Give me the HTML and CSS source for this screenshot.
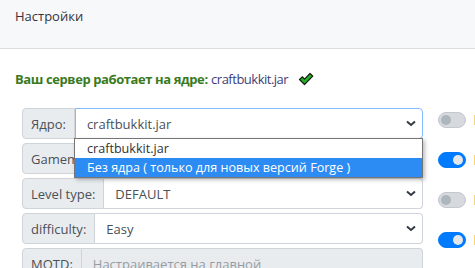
FILE: index.html
```html
<!DOCTYPE html>
<html lang="ru">
<head>
    <meta charset="UTF-8">
    <meta name="viewport" content="width=device-width, initial-scale=1.0">
    <title>Настройки</title>
    <link rel="stylesheet" href="styles.css">
</head>
<body>
    <div class="card">
        <div class="card-header">Настройки</div>
        <div class="card-body">
            <p class="status">
                <b>Ваш сервер работает на ядре:</b> <span class="core">craftbukkit.jar</span>
                <svg class="check" width="16" height="14" viewBox="0 0 16 14">
                    <path d="M1.5 7.5 L4.5 4.8 L6.5 7.2 L12 1.5 L14.8 4.2 L6.5 12.5 Z" fill="#22b322" stroke="#1a1a1a" stroke-width="1.2" stroke-linejoin="round"/>
                </svg>
            </p>
            <div class="settings">
                <div class="fields">
                    <div class="input-group">
                        <span class="addon">Ядро:</span>
                        <div class="select focus">craftbukkit.jar</div>
                        <ul class="dropdown">
                            <li>craftbukkit.jar</li>
                            <li class="active">Без ядра ( только для новых версий Forge )</li>
                        </ul>
                    </div>
                    <div class="input-group">
                        <span class="addon">Gamemode:</span>
                        <div class="select">Survival</div>
                    </div>
                    <div class="input-group">
                        <span class="addon">Level type:</span>
                        <div class="select">DEFAULT</div>
                    </div>
                    <div class="input-group">
                        <span class="addon">difficulty:</span>
                        <div class="select">Easy</div>
                    </div>
                    <div class="input-group">
                        <span class="addon">MOTD:</span>
                        <div class="input disabled">Настраивается на главной</div>
                    </div>
                </div>
                <div class="switches">
                    <div class="switch"><span class="toggle"></span><span class="hint"></span></div>
                    <div class="switch"><span class="toggle on"></span><span class="hint"></span></div>
                    <div class="switch"><span class="toggle"></span><span class="hint"></span></div>
                    <div class="switch"><span class="toggle on"></span><span class="hint"></span></div>
                </div>
            </div>
        </div>
    </div>
</body>
</html>
```

FILE: styles.css
```css
body {
    margin: 0;
    font-family: 'Open Sans', 'Noto Sans', sans-serif;
    font-size: 13px;
    color: #212529;
    background-color: #ffffff;
    overflow: hidden;
}

.card-header {
    height: 49px;
    padding: 7px 15px 0;
    box-sizing: border-box;
    background-color: #f7f8fa;
    border-bottom: 1px solid #dcdcdc;
    color: #33333d;
}

.card-body {
    padding: 0 15px;
}

.status {
    margin: 21px 0 20px;
    color: #3d3d7a;
}

.status b {
    color: #3a7a22;
    letter-spacing: -0.4px;
}

.core {
    letter-spacing: -0.5px;
}

.check {
    vertical-align: -2px;
    margin-left: 6px;
}

.settings {
    display: flex;
    gap: 15px;
    padding-left: 7px;
}

.fields {
    flex: 0 0 401px;
    display: flex;
    flex-direction: column;
    gap: 4px;
}

.input-group {
    display: flex;
    height: 31px;
    position: relative;
}

.addon {
    display: flex;
    align-items: center;
    padding: 0 8px;
    background-color: #e9ecef;
    border: 1px solid #ced4da;
    border-radius: 4px 0 0 4px;
    color: #495057;
}

.select,
.input {
    flex: 1;
    display: flex;
    align-items: center;
    padding: 0 11px;
    border: 1px solid #ced4da;
    border-left: none;
    border-radius: 0 4px 4px 0;
    color: #495057;
    background-color: #ffffff;
}

.select {
    background-image: url("data:image/svg+xml,%3Csvg xmlns='http://www.w3.org/2000/svg' width='10' height='7' viewBox='0 0 10 7'%3E%3Cpath d='M1 1.5 L5 5 L9 1.5' fill='none' stroke='%23343a40' stroke-width='2'/%3E%3C/svg%3E");
    background-repeat: no-repeat;
    background-position: right 6px center;
}

.select.focus {
    border: 1px solid #80bdff;
}

.input.disabled {
    background-color: #e9ecef;
    color: #979ca2;
}

.dropdown {
    position: absolute;
    left: 52px;
    right: 0;
    top: 30px;
    margin: 0;
    padding: 0;
    list-style: none;
    font-size: 12.6px;
    background-color: #ffffff;
    border: 1px solid #767676;
    box-shadow: 2px 2px 4px rgba(0, 0, 0, 0.25);
    z-index: 2;
}

.dropdown li {
    height: 19px;
    line-height: 19px;
    padding-left: 12px;
    color: #333333;
}

.dropdown li.active {
    background-color: #2c8cf4;
    color: #ffffff;
}

.switches {
    flex: 0 0 auto;
    display: flex;
    flex-direction: column;
    gap: 24px;
    padding-top: 4px;
}

.switch {
    display: flex;
    align-items: center;
    gap: 8px;
    height: 16px;
}

.toggle {
    position: relative;
    width: 28px;
    height: 16px;
    box-sizing: border-box;
    border-radius: 8px;
    background-color: #d6dadf;
    border: 1px solid #c3c8cd;
}

.toggle::after {
    content: '';
    position: absolute;
    top: 2px;
    left: 2px;
    width: 10px;
    height: 10px;
    border-radius: 50%;
    background-color: #adb5bd;
}

.toggle.on {
    background-color: #007bff;
    border-color: #007bff;
}

.toggle.on::after {
    left: 14px;
    background-color: #e4e7ea;
}

.hint {
    width: 3px;
    height: 10px;
    background-color: #f6d97a;
}
```
